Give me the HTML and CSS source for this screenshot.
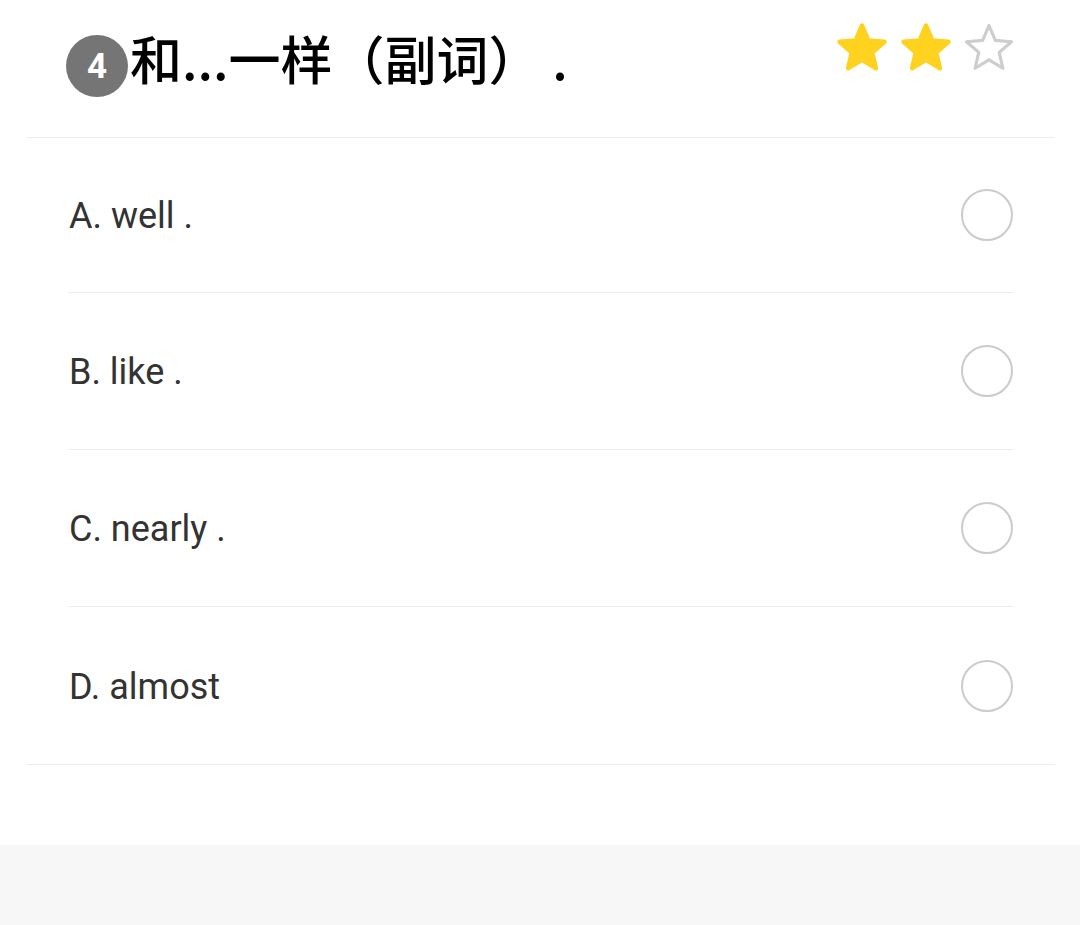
FILE: index.html
```html
<!DOCTYPE html>
<html lang="zh">
<head>
<meta charset="utf-8">
<link rel="stylesheet" href="styles.css">
</head>
<body>
<div class="page">
  <header class="question">
    <div class="title">
      <span class="badge">4</span>
      <h1 class="qtext">和...一样（副词） .</h1>
    </div>
    <div class="stars">
      <svg class="star" viewBox="0 0 24 24"><path class="fill" d="M12 17.27L18.18 21l-1.64-7.03L22 9.24l-7.19-.61L12 2 9.19 8.63 2 9.24l5.46 4.73L5.82 21z"/></svg>
      <svg class="star" viewBox="0 0 24 24"><path class="fill" d="M12 17.27L18.18 21l-1.64-7.03L22 9.24l-7.19-.61L12 2 9.19 8.63 2 9.24l5.46 4.73L5.82 21z"/></svg>
      <svg class="star" viewBox="0 0 24 24"><path class="empty" d="M12 17.27L18.18 21l-1.64-7.03L22 9.24l-7.19-.61L12 2 9.19 8.63 2 9.24l5.46 4.73L5.82 21z"/></svg>
    </div>
  </header>
  <ul class="options">
    <li class="option"><span class="label">A. well .</span><span class="radio"></span></li>
    <li class="option"><span class="label">B. like .</span><span class="radio"></span></li>
    <li class="option"><span class="label">C. nearly .</span><span class="radio"></span></li>
    <li class="option"><span class="label">D. almost</span><span class="radio"></span></li>
  </ul>
  <div class="spacer"></div>
  <div class="footer"></div>
</div>
</body>
</html>
```

FILE: styles.css
```css
* { box-sizing: border-box; }
html, body { margin: 0; padding: 0; background: #fff; }
body { font-family: Roboto, "Noto Sans CJK SC", sans-serif; }
.page { width: 1080px; height: 925px; display: flex; flex-direction: column; }

.question {
  height: 138px;
  margin: 0 25px 0 26px;
  border-bottom: 1px solid #ececec;
  display: flex;
  justify-content: space-between;
  align-items: flex-start;
  padding: 0 41px 0 40px;
}
.title { display: flex; align-items: flex-start; }
.badge {
  width: 62px; height: 62px; border-radius: 50%;
  background: #757575; color: #fff;
  font-family: Roboto, sans-serif; font-weight: 700; font-size: 35px;
  display: flex; align-items: center; justify-content: center;
  margin-top: 35px;
}
.qtext {
  margin: 20px 0 0 2px;
  font-family: "Noto Sans CJK SC", sans-serif;
  font-weight: 500;
  font-size: 52px;
  line-height: 76px;
  color: #000;
}
.stars { display: flex; gap: 9.5px; margin-top: 21px; margin-right: -2px; }
.star { width: 54px; height: 54px; }
.star .fill { fill: #ffd21f; stroke: #ffd21f; stroke-width: 2; stroke-linejoin: round; }
.star .empty { fill: none; stroke: #cdcdcf; stroke-width: 1.4; stroke-linejoin: round; }

.options {
  list-style: none; margin: 0 25px 0 26px; padding: 0 42px;
  border-bottom: 1px solid #ececec;
}
.option {
  height: 157px;
  display: flex; align-items: center; justify-content: space-between;
  border-bottom: 1px solid #ececec;
}
.option:first-child { height: 155px; }
.option:last-child { border-bottom: none; }
.label { font-size: 36px; color: #333; padding-left: 1px; padding-top: 2px; }
.radio {
  width: 52px; height: 52px; border-radius: 50%;
  border: 2.5px solid #cbcbcb;
}
.spacer { height: 80px; }
.footer { flex: 1; background: #f7f7f7; }
```
